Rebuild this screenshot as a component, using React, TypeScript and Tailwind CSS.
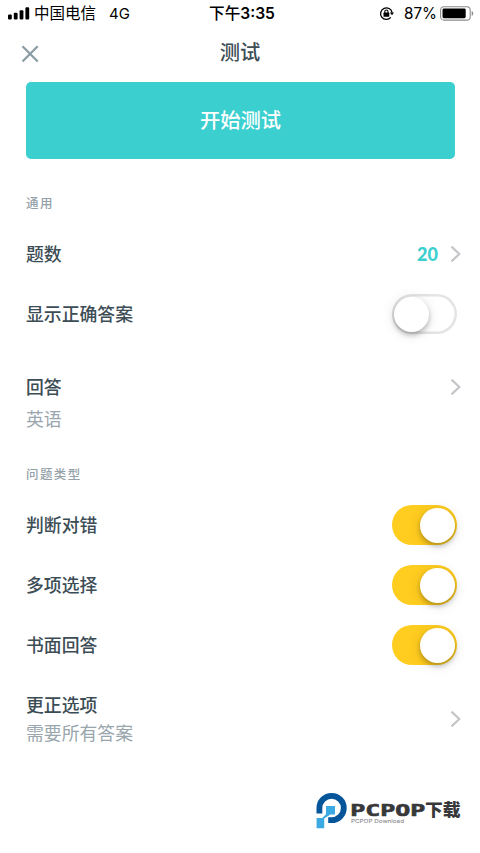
import React from "react";

const CJK = "font-['Inter','Noto_Sans_CJK_SC',sans-serif]";

function Chevron() {
  return (
    <svg className="h-5 w-3 shrink-0" viewBox="0 0 12 20" fill="none" stroke="#c4c6c9" strokeWidth="2.2">
      <path d="M1.5 2.6 9.3 10l-7.8 7.4" />
    </svg>
  );
}

function Toggle({ on }: { on: boolean }) {
  return (
    <div
      className={
        on
          ? "flex h-10 w-[65px] items-center justify-end rounded-full bg-[#ffcd1f] pr-[2px]"
          : "flex h-10 w-[65px] items-center justify-start rounded-full bg-white pl-[2px] shadow-[inset_0_0_0_2.5px_#e4e4e4]"
      }
    >
      <div className="h-[35px] w-[35px] rounded-full bg-white shadow-[0_3px_5px_rgba(0,0,0,0.24),0_2px_14px_rgba(0,0,0,0.12)]" />
    </div>
  );
}

function Label({ children }: { children: React.ReactNode }) {
  return <span className="pt-px text-[17.85px] leading-6 font-medium text-[#3c4d55]">{children}</span>;
}

function Detail({ children }: { children: React.ReactNode }) {
  return <span className="text-[17.85px] leading-6 font-normal text-[#99a6ad]">{children}</span>;
}

function ToggleRow({ label, on }: { label: string; on: boolean }) {
  return (
    <div className="flex h-[60px] items-center justify-between pr-[23px]">
      <Label>{label}</Label>
      <Toggle on={on} />
    </div>
  );
}

function StatusBar() {
  return (
    <div className="grid h-[27px] grid-cols-[1fr_auto_1fr] items-center text-[15.5px] leading-none text-black">
      <div className="flex items-center pl-2">
        <svg className="h-[13px] w-[22px]" viewBox="0 0 22 13">
          <rect x="0" y="7.5" width="3.8" height="5" rx="1.1" />
          <rect x="5.8" y="5.7" width="3.8" height="6.8" rx="1.1" />
          <rect x="11.6" y="3.2" width="3.8" height="9.3" rx="1.1" />
          <rect x="17.4" y="0.3" width="3.8" height="12.2" rx="1.1" />
        </svg>
        <span className="ml-1 pt-px">中国电信</span>
        <span className="ml-[13px] text-[15px]">4G</span>
      </div>
      <div className="pl-1 text-[15.6px] font-semibold">
        <span className="font-medium">下午</span>3:35
      </div>
      <div className="flex items-center justify-end pr-[6px]">
        <svg className="h-[15px] w-[15px]" viewBox="0 0 15 15">
          <path d="M13.1 6.6A5.8 5.8 0 1 0 11.8 11.4" fill="none" stroke="#000" strokeWidth="1.3" />
          <path d="M10.8 6.4H15L13 9.2z" />
          <rect x="4.5" y="6.6" width="5.8" height="4.2" rx="0.6" />
          <path d="M5.8 6.9V5.6a1.6 1.6 0 0 1 3.2 0v1.3" fill="none" stroke="#000" strokeWidth="1.1" />
        </svg>
        <span className="ml-[10px] text-[15.2px]">87%</span>
        <svg className="ml-[3px] h-[15px] w-[34px]" viewBox="0 0 34 15">
          <rect x="0.6" y="0.7" width="29.6" height="13.4" rx="3.4" fill="none" stroke="#8b8b8b" strokeWidth="1.1" />
          <rect x="2.5" y="2.6" width="23.2" height="9.6" rx="1.4" />
          <path d="M31.7 5v4.8c2.1-.8 2.1-4 0-4.8z" fill="#8b8b8b" />
        </svg>
      </div>
    </div>
  );
}

function Logo() {
  return (
    <svg className="h-[38px] w-[148px]" viewBox="0 0 148 38">
      <path d="M3.4 21.5V16a12.2 12.2 0 1 1 12.2 12.2h-3.4" fill="none" stroke="#05559b" strokeWidth="5.8" />
      <path d="M10 14h9v8.5h-4.6l-6.2 4V36.2H.6V26h5.6l3.8-3.8z" fill="#3ba9e2" />
      <text x="34.3" y="23.7" textLength="75" lengthAdjust="spacingAndGlyphs" fontFamily="DejaVu Sans Mono" fontSize="15.6" fontWeight="700" fill="#38383a" stroke="#38383a" strokeWidth="0.6">
        PCPOP
      </text>
      <text x="109" y="24.3" textLength="35.5" lengthAdjust="spacingAndGlyphs" fontFamily="Noto Sans CJK SC" fontSize="17.5" fontWeight="900" fill="#38383a">
        下载
      </text>
      <text x="35" y="31.4" textLength="53" lengthAdjust="spacingAndGlyphs" fontFamily="Inter" fontSize="5.2" fill="#77777b">
        PCPOP Download
      </text>
    </svg>
  );
}

export default function App() {
  return (
    <div className={`${CJK} h-[853px] w-[480px] overflow-hidden bg-white`}>
      <StatusBar />
      <header className="grid h-[55px] grid-cols-[1fr_auto_1fr] items-start">
        <svg className="mt-[18px] ml-[21px] h-[18px] w-[18px]" viewBox="0 0 18 18" stroke="#8b9ba3" strokeWidth="2.2">
          <path d="M1.5 1.2 16.7 16.6M16.7 1.2 1.5 16.6" />
        </svg>
        <h1 className="mt-[11px] text-[20.3px] leading-[30px] font-medium text-[#3c4d55]">测试</h1>
      </header>
      <main className="pl-[26px]">
        <button className="flex h-[76.5px] w-[429px] items-center justify-center rounded-[5px] bg-[#3ccfcf] pt-[2px] text-[20.3px] font-medium text-white">
          开始测试
        </button>
        <h2 className="mt-[35.5px] text-[12.5px] leading-5 font-medium tracking-[1.4px] text-[#93a1a8]">通用</h2>
        <div className="mt-[10px] flex h-[60px] items-center justify-between pr-[18px]">
          <Label>题数</Label>
          <div className="flex items-center gap-3">
            <span className="font-['Lato'] text-[18px] leading-6 font-black text-[#3ccfcf]">20</span>
            <Chevron />
          </div>
        </div>
        <ToggleRow label="显示正确答案" on={false} />
        <div className="mt-[31px] flex items-start justify-between pr-[18px]">
          <div className="flex flex-col gap-2">
            <Label>回答</Label>
            <Detail>英语</Detail>
          </div>
          <div className="mt-[2px]"><Chevron /></div>
        </div>
        <h2 className="mt-[33px] text-[12.5px] leading-5 font-medium tracking-[1.4px] text-[#93a1a8]">问题类型</h2>
        <div className="mt-[10px]">
          <ToggleRow label="判断对错" on />
          <ToggleRow label="多项选择" on />
          <ToggleRow label="书面回答" on />
        </div>
        <div className="mt-[18px] flex items-center justify-between pr-[18px]">
          <div className="flex flex-col gap-1">
            <Label>更正选项</Label>
            <Detail>需要所有答案</Detail>
          </div>
          <div className="pb-[2px]"><Chevron /></div>
        </div>
      </main>
      <footer className="mt-[46px] flex justify-end pr-4">
        <Logo />
      </footer>
    </div>
  );
}
